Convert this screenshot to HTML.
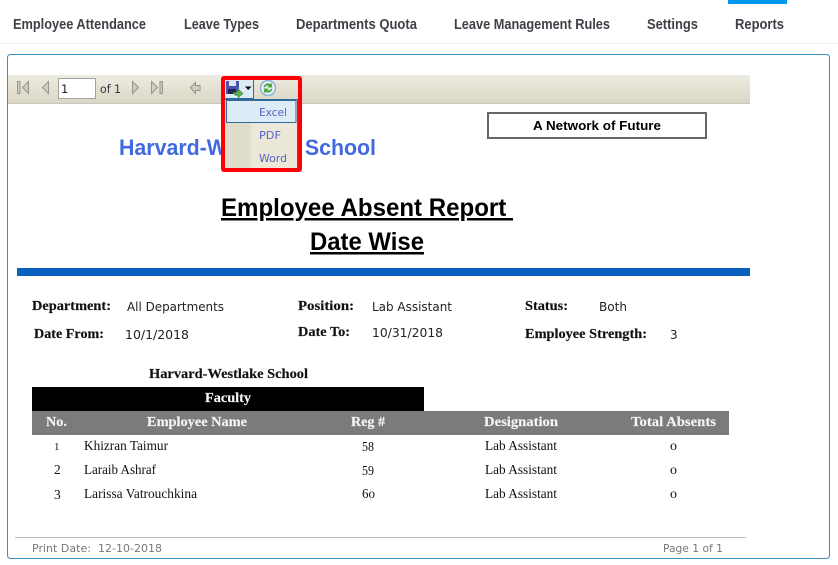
<!DOCTYPE html>
<html lang="en"><head><meta charset="utf-8"><title>Employee Absent Report</title>
<style>
html,body{margin:0;padding:0;background:#fff;width:838px;height:565px;overflow:hidden}
svg{display:block}
.nav{font:bold 14.5px "Liberation Sans",sans-serif;fill:#3d4147}
.lb{font:bold 14px "Liberation Serif",serif;fill:#111;stroke:#111;stroke-width:.15}
.v{font:12px "DejaVu Sans",sans-serif;fill:#222}
.th{font:bold 14px "Liberation Serif",serif;fill:#f4f4f4;stroke:#f4f4f4;stroke-width:.15}
.td{font:13.5px "Liberation Serif",serif;fill:#111}
.m{font:11px "DejaVu Sans",sans-serif;fill:#5a62c6}
.ft{font:11px "DejaVu Sans",sans-serif;fill:#777}
.h{font-family:"Liberation Sans",sans-serif;font-weight:bold}
</style></head><body>
<svg width="838" height="565" viewBox="0 0 838 565" xmlns="http://www.w3.org/2000/svg">
<defs><linearGradient id="tb" x1="0" y1="0" x2="0" y2="1"><stop offset="0" stop-color="#eeecE2"/><stop offset=".5" stop-color="#e4e1d3"/><stop offset="1" stop-color="#dad7c8"/></linearGradient></defs>
<rect width="838" height="565" fill="#fff"/>
<rect x="728" y="0" width="59" height="4" fill="#0098ee"/>
<rect x="0" y="43" width="838" height="1" fill="#f0f0f0"/>
<text class="nav" x="13" y="29" textLength="133" lengthAdjust="spacingAndGlyphs">Employee Attendance</text>
<text class="nav" x="184" y="29" textLength="75" lengthAdjust="spacingAndGlyphs">Leave Types</text>
<text class="nav" x="296" y="29" textLength="121" lengthAdjust="spacingAndGlyphs">Departments Quota</text>
<text class="nav" x="454" y="29" textLength="156" lengthAdjust="spacingAndGlyphs">Leave Management Rules</text>
<text class="nav" x="647" y="29" textLength="51" lengthAdjust="spacingAndGlyphs">Settings</text>
<text class="nav" x="735" y="29" textLength="49" lengthAdjust="spacingAndGlyphs">Reports</text>

<rect x="7.5" y="54.5" width="822" height="504" rx="3" fill="#fff" stroke="#3b8dc2"/>

<rect x="8" y="75" width="742" height="28" fill="url(#tb)"/>
<rect x="8" y="103" width="742" height="1" fill="#c9c7ba"/>
<g fill="#cfcdc2" stroke="#96968f">
<path d="M17.5 81.5h2.500v12h-2.500z"/><path d="M28.5 81.5v12l-6-6z"/>
<path d="M48.5 81.5v12l-6-6z"/>
<path d="M132.5 81.5v12l6-6z"/>
<path d="M151.5 81.5v12l6-6z"/><path d="M160 81.5h2.500v12h-2.500z"/>
<path d="M190.5 87.5l5-5v3h4.500v5h-4.500v3z"/>
</g>
<rect x="58.500" y="78.500" width="37" height="20" fill="#fff" stroke="#a5a5a0"/>
<text x="61" y="93" style="font:11.500px 'DejaVu Sans',sans-serif" fill="#222">1</text>
<text x="100" y="93" style="font:11.500px 'DejaVu Sans',sans-serif" fill="#334" textLength="21" lengthAdjust="spacingAndGlyphs">of 1</text>

<rect x="225" y="80" width="28" height="18" fill="#dcebf5"/>
<rect x="253" y="80" width="1" height="18" fill="#2f6a9a"/>
<rect x="225" y="98" width="29" height="1" fill="#2f6a9a"/>
<rect x="226" y="81" width="13" height="13" fill="#4a55b0"/>
<rect x="229" y="81" width="7" height="5" fill="#dfe2f4"/>
<rect x="228" y="89" width="8" height="5" fill="#20244f"/>
<path d="M233 92.500l3 0 2 -1.500v-2l5 4.500-5 4.500v-2.500h-2.500z" fill="#5aae4a" stroke="#3d8a35" stroke-width=".6"/>
<path d="M245 86.500h6.500l-3.250 3.500z" fill="#000"/>
<circle cx="268" cy="88" r="7.500" fill="#e8eff5" stroke="#8fb2d6" stroke-width="1.500"/>
<path d="M263.500 87c1-3 4-4.500 7-3l1-1.500.8 5h-5l1.500-1.500c-2-.8-3.500 0-4 1.500z" fill="#4aa63c"/>
<path d="M272.500 89c-1 3-4 4.500-7 3l-1 1.500-.8-5h5l-1.500 1.500c2 .8 3.500 0 4-1.500z" fill="#4aa63c"/>

<text class="h" x="119" y="155" font-size="22" fill="#4169e1" textLength="257" lengthAdjust="spacingAndGlyphs">Harvard-Westlake School</text>

<rect x="225" y="99" width="72" height="69" fill="#ebe8d9"/>
<rect x="225" y="99" width="26" height="69" fill="#e0ddcc"/>
<rect x="297" y="99" width="1" height="69" fill="#2f6a9a"/>
<rect x="225" y="99" width="73" height="1" fill="#2f6a9a"/>
<rect x="226.500" y="100.500" width="69.500" height="22" fill="#dcebf5" stroke="#2f6a9a"/>
<text class="m" x="259" y="116" textLength="28" lengthAdjust="spacingAndGlyphs">Excel</text>
<text class="m" x="259" y="139" textLength="22" lengthAdjust="spacingAndGlyphs">PDF</text>
<text class="m" x="259" y="162" textLength="28" lengthAdjust="spacingAndGlyphs">Word</text>
<rect x="223" y="78" width="77" height="92" rx="1" fill="none" stroke="#fb0007" stroke-width="4"/>

<rect x="488" y="113" width="218" height="25" fill="#fff" stroke="#666" stroke-width="2"/>
<text class="h" x="533" y="130" font-size="12.500" fill="#000" textLength="128" lengthAdjust="spacingAndGlyphs">A Network of Future</text>

<text class="h" x="221" y="216" font-size="25" fill="#000" text-decoration="underline" textLength="292" lengthAdjust="spacingAndGlyphs" xml:space="preserve">Employee Absent Report </text>
<text class="h" x="310" y="250" font-size="25" fill="#000" text-decoration="underline" textLength="114" lengthAdjust="spacingAndGlyphs">Date Wise</text>
<rect x="17" y="268" width="733" height="8" fill="#0a60bd"/>

<text class="lb" x="32" y="310" textLength="79" lengthAdjust="spacingAndGlyphs">Department:</text>
<text class="v" x="127" y="311" textLength="97" lengthAdjust="spacingAndGlyphs">All Departments</text>
<text class="lb" x="298" y="310" textLength="56" lengthAdjust="spacingAndGlyphs">Position:</text>
<text class="v" x="372" y="311" textLength="80" lengthAdjust="spacingAndGlyphs">Lab Assistant</text>
<text class="lb" x="525" y="310" textLength="43" lengthAdjust="spacingAndGlyphs">Status:</text>
<text class="v" x="599" y="311" textLength="28" lengthAdjust="spacingAndGlyphs">Both</text>
<text class="lb" x="34" y="338" textLength="70" lengthAdjust="spacingAndGlyphs">Date From:</text>
<text class="v" x="125" y="339" textLength="64" lengthAdjust="spacingAndGlyphs">10/1/2018</text>
<text class="lb" x="298" y="336" textLength="52" lengthAdjust="spacingAndGlyphs">Date To:</text>
<text class="v" x="372" y="337" textLength="71" lengthAdjust="spacingAndGlyphs">10/31/2018</text>
<text class="lb" x="525" y="338" textLength="122" lengthAdjust="spacingAndGlyphs">Employee Strength:</text>
<text class="v" x="670" y="339">3</text>

<text class="lb" x="149" y="378" textLength="159" lengthAdjust="spacingAndGlyphs">Harvard-Westlake School</text>
<rect x="32" y="387" width="392" height="24" fill="#000"/>
<text class="th" x="205" y="402" textLength="46" lengthAdjust="spacingAndGlyphs">Faculty</text>
<rect x="32" y="411" width="697" height="24" fill="#7b7c7a"/>
<text class="th" x="46" y="426" textLength="21" lengthAdjust="spacingAndGlyphs">No.</text>
<text class="th" x="147" y="426" textLength="100" lengthAdjust="spacingAndGlyphs">Employee Name</text>
<text class="th" x="351" y="426" textLength="34" lengthAdjust="spacingAndGlyphs">Reg #</text>
<text class="th" x="484" y="426" textLength="74" lengthAdjust="spacingAndGlyphs">Designation</text>
<text class="th" x="631" y="426" textLength="85" lengthAdjust="spacingAndGlyphs">Total Absents</text>

<text class="td" x="54" y="450" font-size="11" style="font-size:11px">1</text>
<text class="td" x="84" y="450" textLength="84" lengthAdjust="spacingAndGlyphs">Khizran Taimur</text>
<text class="td" x="362" y="451" textLength="12" lengthAdjust="spacingAndGlyphs">58</text>
<text class="td" x="485" y="450" textLength="72" lengthAdjust="spacingAndGlyphs">Lab Assistant</text>
<text class="td" x="670" y="450" textLength="7" lengthAdjust="spacingAndGlyphs">o</text>

<text class="td" x="54" y="474">2</text>
<text class="td" x="84" y="474" textLength="72" lengthAdjust="spacingAndGlyphs">Laraib Ashraf</text>
<text class="td" x="362" y="475" textLength="12" lengthAdjust="spacingAndGlyphs">59</text>
<text class="td" x="485" y="474" textLength="72" lengthAdjust="spacingAndGlyphs">Lab Assistant</text>
<text class="td" x="670" y="474" textLength="7" lengthAdjust="spacingAndGlyphs">o</text>

<text class="td" x="54" y="499">3</text>
<text class="td" x="84" y="498" textLength="113" lengthAdjust="spacingAndGlyphs">Larissa Vatrouchkina</text>
<text class="td" x="362" y="498" textLength="13" lengthAdjust="spacingAndGlyphs">6o</text>
<text class="td" x="485" y="498" textLength="72" lengthAdjust="spacingAndGlyphs">Lab Assistant</text>
<text class="td" x="670" y="498" textLength="7" lengthAdjust="spacingAndGlyphs">o</text>

<rect x="15" y="537" width="731" height="1" fill="#bdbdbd"/>
<text class="ft" x="32" y="552" textLength="130" lengthAdjust="spacing" xml:space="preserve">Print Date:  12-10-2018</text>
<text class="ft" x="663" y="552" textLength="60" lengthAdjust="spacingAndGlyphs">Page 1 of 1</text>
</svg>
</body></html>
